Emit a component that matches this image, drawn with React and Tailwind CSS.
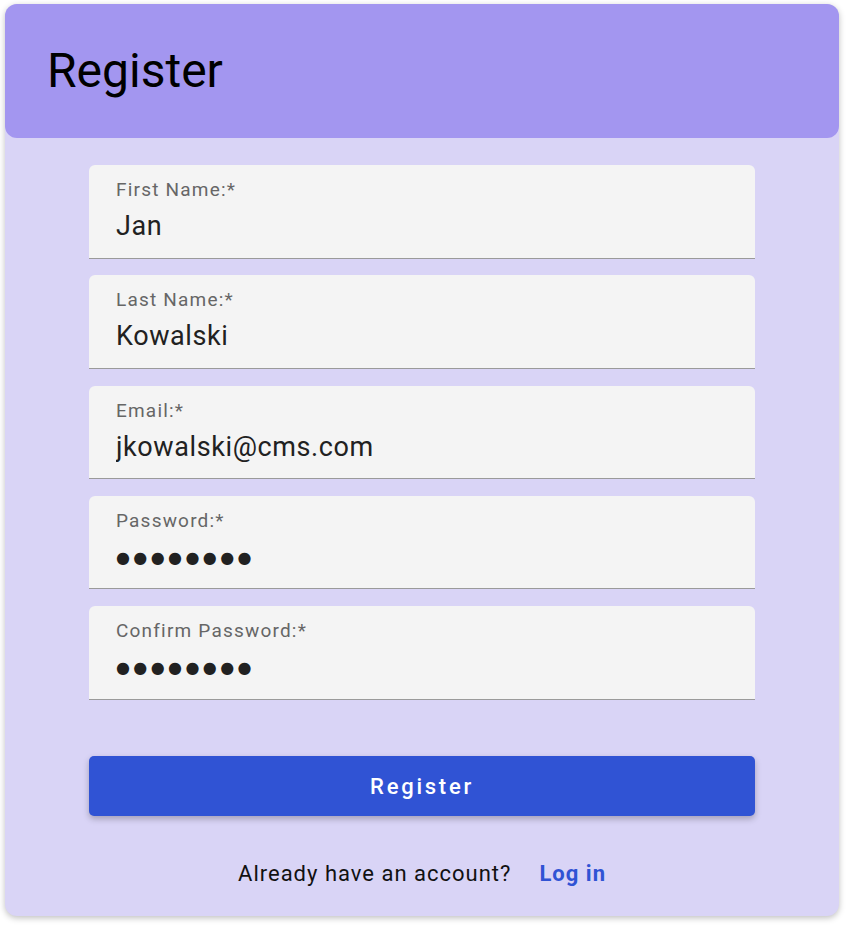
import React from "react";

const fields = [
  { label: "First Name:*", value: "Jan", type: "text" },
  { label: "Last Name:*", value: "Kowalski", type: "text" },
  { label: "Email:*", value: "jkowalski@cms.com", type: "text" },
  { label: "Password:*", value: "●●●●●●●●", type: "password" },
  { label: "Confirm Password:*", value: "●●●●●●●●", type: "password" },
];

export default function App() {
  return (
    <div
      className="w-[846px] h-[926px] bg-white pt-[4px] pl-[5px]"
      style={{ fontFamily: "Roboto, 'Noto Sans', sans-serif" }}
    >
      <div className="w-[834px] h-[912px] bg-[#d9d4f6] rounded-[12px] shadow-[0_2px_6px_rgba(0,0,0,0.25)] flex flex-col">
        <div className="h-[134px] bg-[#a396f0] rounded-[12px] flex items-center px-[42px]">
          <h1 className="text-[48px] leading-none text-black font-normal">Register</h1>
        </div>
        <div className="px-[84px] pt-[27px] flex flex-col gap-[16.75px]">
          {fields.map((f) => (
            <div
              key={f.label}
              className="h-[93.5px] bg-[#f4f4f4] rounded-t-[6px] border-b border-[#9a9a9a] pl-[27px] pr-4 flex flex-col"
            >
              <label className="pt-[15px] text-[19px] leading-[20px] text-[#666666] tracking-[1.2px]">{f.label}</label>
              {f.type === "password" ? (
                <div
                  className="mt-[10px] h-[32px] flex items-center text-[16px] leading-none text-[#212121] tracking-[3.4px] pt-[2px]"
                  style={{ fontFamily: "'DejaVu Sans', sans-serif" }}
                >
                  {f.value}
                </div>
              ) : (
                <input
                  type="text"
                  defaultValue={f.value}
                  readOnly
                  className="mt-[10px] bg-transparent outline-none text-[27px] leading-[32px] text-[#212121] tracking-[0.6px] w-full"
                  style={{ fontFamily: "Roboto, 'Noto Sans', sans-serif" }}
                />
              )}
            </div>
          ))}
          <button className="mt-[40px] h-[60px] w-full bg-[#3053d4] rounded-[5px] text-white text-[22px] font-medium tracking-[2.75px] shadow-[0_3px_6px_rgba(0,0,0,0.25)]">
            Register
          </button>
          <div className="mt-[24px] flex justify-center items-center text-[22px] gap-[28px] tracking-[1px]">
            <span className="text-[#111111]">Already have an account?</span>
            <span className="text-[#3053d4] font-bold">Log in</span>
          </div>
        </div>
      </div>
    </div>
  );
}
